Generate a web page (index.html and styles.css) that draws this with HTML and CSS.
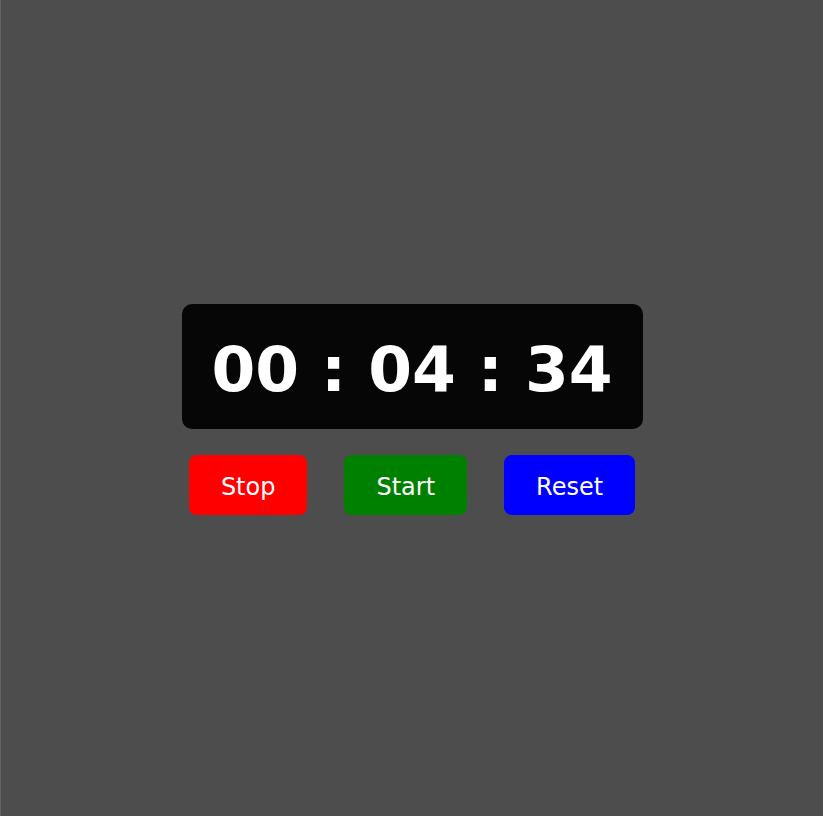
FILE: index.html
```html
<!DOCTYPE html>
<html lang="en">
<head>
<meta charset="utf-8">
<title>Stopwatch</title>
<link rel="stylesheet" href="styles.css">
</head>
<body>
<main class="page">
  <div class="stopwatch">
    <div class="display">00 : 04 : 34</div>
    <div class="controls">
      <button class="btn btn-stop">Stop</button>
      <button class="btn btn-start">Start</button>
      <button class="btn btn-reset">Reset</button>
    </div>
  </div>
</main>
</body>
</html>
```
FILE: styles.css
```css
html, body {
  margin: 0;
  padding: 0;
  height: 100%;
}
body {
  background: #4d4d4d;
  font-family: "DejaVu Sans", Verdana, sans-serif;
}
.page {
  box-sizing: border-box;
  height: 100%;
  padding-top: 3px;
  border-left: 1px solid #636363;
  display: flex;
  align-items: center;
  justify-content: center;
}
.stopwatch {
  display: flex;
  flex-direction: column;
  align-items: center;
  gap: 26px;
}
.display {
  box-sizing: border-box;
  width: 461px;
  height: 125px;
  background: #060606;
  color: #ffffff;
  font-weight: bold;
  font-size: 63px;
  line-height: 75px;
  padding: 28px 0 22px;
  text-align: center;
  border-radius: 10px;
  white-space: pre;
}
.controls {
  display: flex;
  gap: 37px;
}
.btn {
  box-sizing: border-box;
  font-family: "DejaVu Sans", Verdana, sans-serif;
  font-size: 24px;
  line-height: 28px;
  height: 60px;
  color: #ffffff;
  border: none;
  border-radius: 8px;
  padding: 18px 32px 14px;
  cursor: pointer;
}
.btn-stop { background: #ff0000; }
.btn-start { background: #008000; }
.btn-reset { background: #0000ff; }
```
